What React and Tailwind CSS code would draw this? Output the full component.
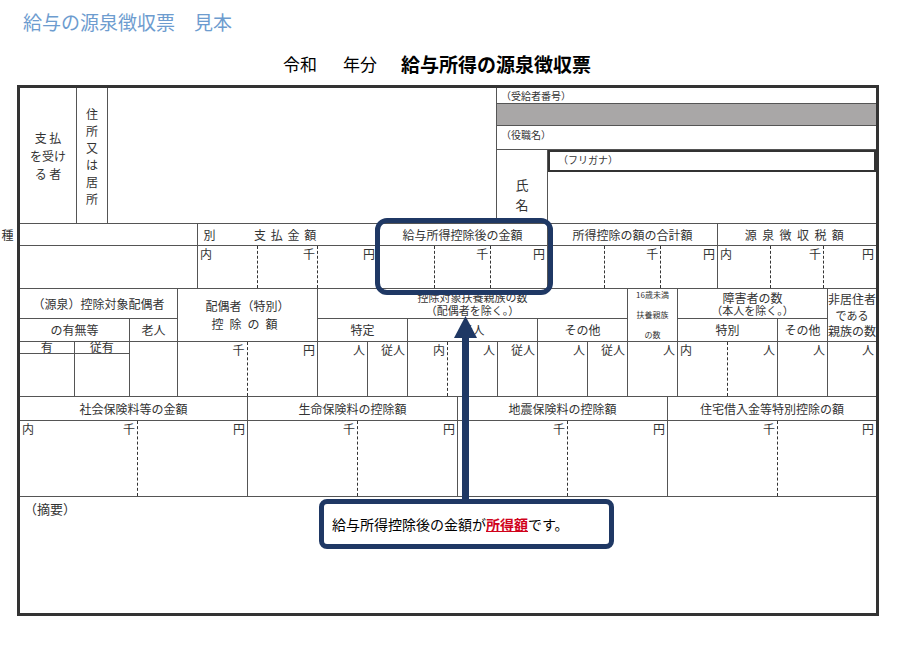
import React from "react";

const L = "border-[#555]";

function Money({ uchi }) {
  // dashed thirds: 内 | 千 | 円
  return (
    <div className="flex h-full">
      <div className="flex-1 border-r border-dashed border-[#333] px-0.5 leading-none pt-0.5">{uchi ? "内" : ""}</div>
      <div className="flex-1 border-r border-dashed border-[#333] text-right px-0.5 leading-none pt-0.5">千</div>
      <div className="flex-1 text-right px-0.5 leading-none pt-0.5">円</div>
    </div>
  );
}

function Money2({ uchi, left = "1fr" }) {
  return (
    <div className="grid h-full" style={{ gridTemplateColumns: `${left} 1fr` }}>
      <div className="flex justify-between border-r border-dashed border-[#333] px-0.5 pt-0.5 leading-none">
        <span>{uchi ? "内" : ""}</span><span>千</span>
      </div>
      <div className="text-right px-0.5 pt-0.5 leading-none">円</div>
    </div>
  );
}

function Cell({ children, className = "" }) {
  return <div className={`border-r border-b ${L} ${className}`}>{children}</div>;
}

function Hd({ children, className = "" }) {
  return <Cell className={`flex items-center justify-center ${className}`}>{children}</Cell>;
}

export default function App() {
  return (
    <div className="relative w-[916px] h-[661px] bg-white text-[#333] overflow-hidden" style={{ fontFamily: '"Noto Sans CJK JP", sans-serif' }}>
      <div className="pl-[23px] pt-[8px] text-[19px] text-[#6d9ccf] leading-[28px]">給与の源泉徴収票　見本</div>
      <div className="flex items-end pl-[283px] mt-[13px] h-[28px] text-[17px] text-black leading-[26px]">
        <span>令和</span><span className="ml-[26px]">年分</span>
        <span className="ml-[24px] font-bold text-[19px]">給与所得の源泉徴収票</span>
      </div>

      <div className="ml-[17px] mt-[8px] w-[862px] h-[531px] border-[3px] border-[#333] text-[11px] flex flex-col">
        {/* section 1 */}
        <div className="grid grid-cols-[57px_31px_389px_1fr] h-[136px]">
          <Hd className="flex-col leading-[18px] text-[12px]"><span>支 払</span><span>を受け</span><span>る 者</span></Hd>
          <Hd className="flex-col leading-[17px] text-[12px]">{"住所又は居所".split("").map((c, i) => <span key={i}>{c}</span>)}</Hd>
          <Cell />
          <div className="flex flex-col border-b border-[#555]">
            <div className="h-[15px] px-1 leading-[15px] text-[10px]">（受給者番号）</div>
            <div className="h-[23px] bg-[#a9a7a7] border-y border-[#555]" />
            <div className="h-[23px] px-1 leading-[18px] text-[10px]">（役職名）</div>
            <div className="flex-1 grid grid-cols-[51px_1fr] border-t border-[#555]">
              <div className="flex flex-col items-center justify-end pb-2 border-r border-[#555] text-[13px] leading-[20px]"><span>氏</span><span>名</span></div>
              <div>
                <div className="h-[22px] border-2 border-[#333] px-2 text-[10px] leading-[16px]">（フリガナ）</div>
              </div>
            </div>
          </div>
        </div>

        {/* section 2 */}
        <div className="grid grid-cols-[178px_180px_170px_170px_1fr] grid-rows-[22px_43px] text-[12px]">
          <Hd className="gap-[190px]"><span>種</span><span>別</span></Hd>
          <Hd className="tracking-[0.4em]">支払金額</Hd>
          <Hd>給与所得控除後の金額</Hd>
          <Hd>所得控除の額の合計額</Hd>
          <Hd className="tracking-[0.45em] border-r-0">源泉徴収税額</Hd>
          <Cell />
          <Cell><Money uchi /></Cell>
          <Cell><Money /></Cell>
          <Cell><Money /></Cell>
          <Cell className="border-r-0"><Money uchi /></Cell>
        </div>

        {/* section 3 */}
        <div className="grid grid-cols-[158px_140px_310px_50px_150px_1fr] h-[108px] text-[12px]">
          <div className="grid grid-rows-[30px_23px_1fr] grid-cols-[110px_1fr]">
            <Hd className="col-span-2">（源泉）控除対象配偶者</Hd>
            <Hd>の有無等</Hd>
            <Hd>老人</Hd>
            <div className="grid grid-cols-2 grid-rows-[12px_1fr] border-r border-b border-[#555]">
              <div className="border-r border-b border-[#555] text-center leading-[10px]">有</div>
              <div className="border-b border-[#555] text-center leading-[10px]">従有</div>
              <div className="border-r border-[#555]" />
              <div />
            </div>
            <Cell />
          </div>
          <div className="grid grid-rows-[53px_1fr]">
            <Hd className="flex-col leading-[18px]"><span>配偶者（特別）</span><span className="tracking-[0.5em]">控除の額</span></Hd>
            <Cell><Money2 /></Cell>
          </div>
          <div className="grid grid-rows-[30px_23px_1fr] grid-cols-[50px_40px_40px_50px_40px_50px_40px]">
            <Hd className="col-span-7 flex-col leading-[13px] text-[11px]"><span>控除対象扶養親族の数</span><span>（配偶者を除く。）</span></Hd>
            <Hd className="col-span-2">特定</Hd>
            <Hd className="col-span-3">老人</Hd>
            <Hd className="col-span-2">その他</Hd>
            <Cell className="text-right px-0.5 leading-none pt-0.5">人</Cell>
            <Cell className="text-right px-0.5 leading-none pt-0.5">従人</Cell>
            <Cell className="grid grid-cols-[40px_1fr] col-span-2">
              <div className="border-r border-dashed border-[#333] text-right pr-0.5 pt-0.5 leading-none">内</div>
              <div className="text-right px-0.5 pt-0.5 leading-none">人</div>
            </Cell>
            <Cell className="text-right px-0.5 leading-none pt-0.5">従人</Cell>
            <Cell className="text-right px-0.5 leading-none pt-0.5">人</Cell>
            <Cell className="text-right px-0.5 leading-none pt-0.5">従人</Cell>
          </div>
          <div className="grid grid-rows-[53px_1fr]">
            <Hd className="flex-col text-[8px] leading-[20px]"><span>16歳未満</span><span>扶養親族</span><span>の数</span></Hd>
            <Cell className="text-right px-0.5 leading-none pt-0.5">人</Cell>
          </div>
          <div className="grid grid-rows-[30px_23px_1fr] grid-cols-[100px_1fr]">
            <Hd className="col-span-2 flex-col leading-[13px]"><span>障害者の数</span><span className="text-[11px]">（本人を除く。）</span></Hd>
            <Hd>特別</Hd>
            <Hd>その他</Hd>
            <Cell className="grid grid-cols-2">
              <div className="border-r border-dashed border-[#333] px-0.5 pt-0.5 leading-none">内</div>
              <div className="text-right px-0.5 pt-0.5 leading-none">人</div>
            </Cell>
            <Cell className="text-right px-0.5 leading-none pt-0.5">人</Cell>
          </div>
          <div className="grid grid-rows-[53px_1fr]">
            <Hd className="flex-col leading-[16px] border-r-0"><span>非居住者</span><span className="text-[11px]">である</span><span>親族の数</span></Hd>
            <Cell className="text-right px-0.5 leading-none pt-0.5 border-r-0">人</Cell>
          </div>
        </div>

        {/* section 4 */}
        <div className="grid grid-cols-[228px_210px_210px_1fr] grid-rows-[24px_76px] text-[12px]">
          <Hd>社会保険料等の金額</Hd>
          <Hd>生命保険料の控除額</Hd>
          <Hd>地震保険料の控除額</Hd>
          <Hd className="border-r-0">住宅借入金等特別控除の額</Hd>
          <Cell><Money2 uchi left="118px" /></Cell>
          <Cell><Money2 left="110px" /></Cell>
          <Cell><Money2 left="110px" /></Cell>
          <Cell className="border-r-0"><Money2 left="110px" /></Cell>
        </div>

        {/* section 5 */}
        <div className="flex-1 px-1 pt-0.5 text-[13px]">（摘要）</div>
      </div>

      {/* callout */}
      <div className="absolute left-[375px] top-[218px] w-[178px] h-[77px] border-[5px] border-[#1f3864] rounded-xl" />
      <svg className="absolute left-[452px] top-[316px]" width="28" height="190" viewBox="0 0 28 190">
        <rect x="10" y="18" width="7" height="172" fill="#1f3864" />
        <polygon points="13.5,0 25,22 2,22" fill="#1f3864" />
      </svg>
      <div className="absolute left-[319px] top-[499px] w-[295px] h-[50px] border-[5px] border-[#1f3864] rounded-lg bg-white flex items-center pl-[8px] text-[14px] text-black">
        給与所得控除後の金額が<span className="text-[#d0021b] font-bold underline">所得額</span>です。
      </div>
    </div>
  );
}
